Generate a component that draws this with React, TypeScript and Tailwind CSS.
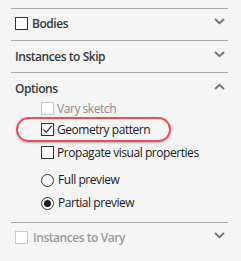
import React from "react";

const font = { fontFamily: '"Open Sans", "Noto Sans", sans-serif' };

function ChevronDown() {
  return (
    <svg width="11" height="7" viewBox="0 0 11 7" className="mb-[4px]">
      <path d="M1 1 L5.5 5.2 L10 1" fill="none" stroke="#767676" strokeWidth="2" />
    </svg>
  );
}
function ChevronUp() {
  return (
    <svg width="11" height="7" viewBox="0 0 11 7" className="mb-[4px]">
      <path d="M1 6 L5.5 1.8 L10 6" fill="none" stroke="#767676" strokeWidth="2" />
    </svg>
  );
}

function Box({ disabled, checked }: { disabled?: boolean; checked?: boolean }) {
  return (
    <span
      className={
        "flex h-[13px] w-[13px] shrink-0 items-center justify-center border bg-white " +
        (disabled ? "border-[#c9c9c9]" : "border-[#333333]")
      }
    >
      {checked && (
        <svg width="11" height="11" viewBox="0 0 11 11">
          <path d="M1.5 5.5 L4.3 8.3 L9.5 2" fill="none" stroke="#333" strokeWidth="1.2" />
        </svg>
      )}
    </span>
  );
}

function Radio({ checked }: { checked?: boolean }) {
  return (
    <span className="flex h-[13px] w-[13px] shrink-0 items-center justify-center rounded-full border border-[#333333] bg-white">
      {checked && <span className="h-[7px] w-[7px] rounded-full bg-[#1f1f1f]" />}
    </span>
  );
}

export default function App() {
  return (
    <div className="relative h-[261px] w-[241px] overflow-hidden bg-[#f5f5f5]" style={font}>
      <div className="ml-[11px] mr-[13px] pt-[8px] text-[12px] leading-[16px] tracking-[-0.45px]">
        {/* Bodies */}
        <div className="flex h-[32px] items-center justify-between border-t border-[#a8a8a8] pb-[2px] pl-[4px] pr-[3px]">
          <div className="flex items-center gap-[4px]">
            <Box />
            <span className="font-semibold text-[#363a40]">Bodies</span>
          </div>
          <ChevronDown />
        </div>
        {/* Instances to Skip */}
        <div className="flex h-[32px] items-center justify-between border-t border-[#a8a8a8] pl-[4px] pr-[3px]">
          <span className="font-semibold text-[#363a40]">Instances to Skip</span>
          <ChevronDown />
        </div>
        {/* Options */}
        <div className="border-t border-[#a8a8a8]">
          <div className="flex h-[26px] items-center justify-between pl-[4px] pr-[3px] pt-[5px]">
            <span className="font-semibold text-[#363a40]">Options</span>
            <ChevronUp />
          </div>
          <div className="flex flex-col pl-[30px] text-[#1a1a1a]">
            <div className="mt-[1px] flex h-[17px] items-center gap-[3px]">
              <Box disabled />
              <span className="text-[#8a8a8a]">Vary sketch</span>
            </div>
            <div className="mt-[4px] flex h-[17px] items-center gap-[3px]">
              <Box checked />
              <span>Geometry pattern</span>
            </div>
            <div className="mt-[6px] flex h-[17px] items-center gap-[3px]">
              <Box />
              <span>Propagate visual properties</span>
            </div>
            <div className="mt-[10px] flex h-[18px] items-center gap-[4px]">
              <Radio />
              <span>Full preview</span>
            </div>
            <div className="mt-[5px] flex h-[18px] items-center gap-[4px]">
              <Radio checked />
              <span>Partial preview</span>
            </div>
          </div>
          <div className="h-[10px]" />
        </div>
        {/* Instances to Vary */}
        <div className="flex h-[30px] items-center justify-between border-t border-[#a8a8a8] pl-[4px] pr-[3px]">
          <div className="flex items-center gap-[5px]">
            <Box disabled />
            <span className="font-semibold text-[#9a9a9a]">Instances to Vary</span>
          </div>
          <ChevronDown />
        </div>
      </div>
      {/* highlight oval */}
      <div className="pointer-events-none absolute left-[16px] top-[117px] h-[25px] w-[155px] rounded-full border-2 border-[#e9505a] shadow-[0_1px_2px_rgba(0,0,0,0.3)]" />
    </div>
  );
}
